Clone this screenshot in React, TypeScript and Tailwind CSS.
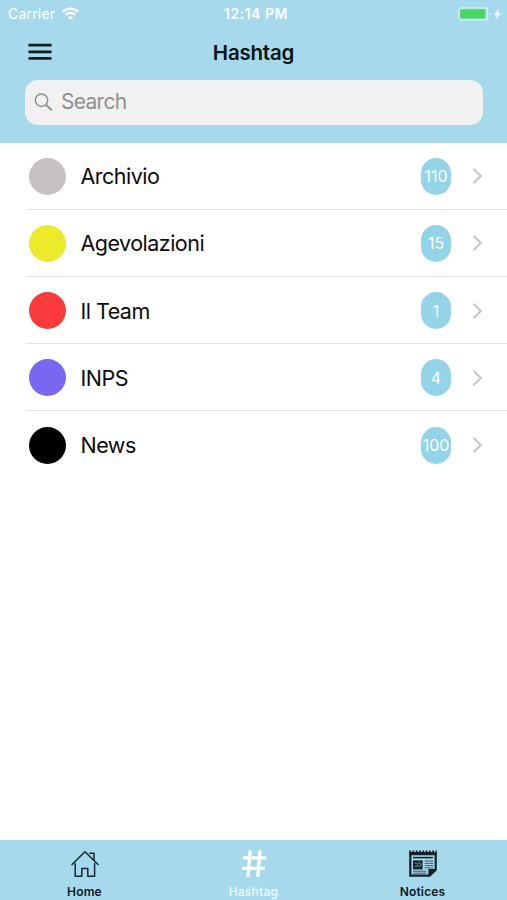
type Tag = {
  name: string;
  count: number;
  dot: string;
};

const tags: Tag[] = [
  {name: 'Archivio', count: 110, dot: 'bg-[#c5c2c1]'},
  {name: 'Agevolazioni', count: 15, dot: 'bg-[#ebeb2b]'},
  {name: 'Il Team', count: 1, dot: 'bg-[#fb3b3b]'},
  {name: 'INPS', count: 4, dot: 'bg-[#7a67f1]'},
  {name: 'News', count: 100, dot: 'bg-black'},
];

function WifiIcon() {
  return (
    <svg className="w-[17px] h-[13px]" viewBox="0 0 17 13" fill="none" stroke="white" strokeWidth="2.3">
      <path d="M.9 4.9C5.1.5 11.9.5 16.1 4.9" />
      <path d="M3.7 7.9c2.7-2.7 6.9-2.7 9.6 0" />
      <path d="M8.5 12.8 5.8 10.2c1.5-1.4 3.9-1.4 5.4 0z" fill="white" stroke="none" />
    </svg>
  );
}

function BatteryIcon() {
  return (
    <svg className="w-[44px] h-[14px]" viewBox="0 0 44 14">
      <rect x=".8" y=".8" width="28.6" height="12" rx="2.5" fill="none" stroke="#d5f2ec" strokeWidth="1.2" />
      <rect x="2.2" y="2.2" width="25" height="9.2" rx="1" fill="#49d763" />
      <path d="M31 5.2c1.5.6 1.5 3 0 3.6z" fill="#d5f2ec" />
      <path d="M41 1.6 36 8h2.9l-1.5 4.8L43.2 6h-3.3z" fill="white" />
    </svg>
  );
}

function HomeIcon() {
  return (
    <svg className="w-7 h-7" viewBox="0 0 28 28" fill="none" stroke="#17282e" strokeWidth="1.5" strokeLinejoin="round" strokeLinecap="round">
      <path d="M1 14.5 14 1.7l13 12.8" />
      <path d="M18.8 3.2h4.2v6.5M4.2 13.8v12.4h6.6v-7.6h6v7.6h6.8V13.8" />
    </svg>
  );
}

function HashIcon() {
  return (
    <svg className="w-7 h-7" viewBox="0 0 28 28" fill="none" stroke="white" strokeWidth="3.3">
      <path d="M10.2.4 8 26.8M20 .4 17.8 26.8M3 7.9h23.3M1.8 18.4h23.3" />
    </svg>
  );
}

function NoticesIcon() {
  return (
    <svg className="w-7 h-7" viewBox="0 0 28 28">
      <path d="M1.3 3V25.7H20.6l6.1-6V3" fill="none" stroke="#132126" strokeWidth="2.2" />
      <path d="M.2.4h1.7v1.7h1.6V.4h1.7v1.7h1.6V.4h1.7v1.7h1.6V.4h1.7v1.7h1.6V.4h1.7v1.7h1.6V.4h1.7v1.7h1.6V.4h1.7v1.7h1.6V.4h1.7v1.7h1.6V.4h1.2v4.9H.2z" fill="#132126" />
      <path d="M19.4 26.8v-7.9h8.4z" fill="#132126" />
      <rect x="4" y="10.4" width="9.6" height="9" fill="#132126" />
      <path d="M4 7.6h20" stroke="#132126" strokeWidth="1.5" />
      <path d="M15.6 11h8.6M15.6 13.3h8.6M15.6 15.6h8.6M15.6 17.9h8.6M4 21.2h13.5M4 23.2h13.5" stroke="#3c5b67" strokeWidth="1" />
      <path d="M5.6 13.2h2.2M5.6 16.4h2.6" stroke="#8bb7c5" strokeWidth=".8" />
      <circle cx="10.2" cy="14.6" r="1.8" fill="none" stroke="#8bb7c5" strokeWidth=".8" />
    </svg>
  );
}

function TagRow({tag, last}: {tag: Tag; last: boolean}) {
  return (
    <li className={`ml-[26px] h-[67.2px] flex items-center pt-px pl-[3px] pr-[23px] border-b ${last ? 'border-transparent' : 'border-[#e2e2e3]'}`}>
      <span className={`size-[37px] rounded-full ${tag.dot}`} />
      <span className="ml-[14.5px] flex-1 text-[21.5px] tracking-[-0.52px] text-[#0b0b0b]">{tag.name}</span>
      <span className="w-[30px] h-[37px] rounded-[15px] bg-[#94d4e8] flex items-center justify-center text-white text-base">
        {tag.count}
      </span>
      <svg className="ml-[21px] w-3 h-[18px]" viewBox="0 0 12 18" fill="none" stroke="#c5c5c8" strokeWidth="2">
        <path d="m1.4 1.8 7.5 7.2-7.5 7.2" />
      </svg>
    </li>
  );
}

export default function App() {
  return (
    <div className="h-[900px] w-[507px] flex flex-col bg-white font-['Inter','Liberation_Sans',sans-serif] overflow-hidden">
      <header className="h-[142.7px] bg-[#a5d9eb]">
        <div className="h-[27px] grid grid-cols-3 items-center text-white">
          <div className="flex items-center gap-[7px] pl-[8px] text-[14px] tracking-[0.2px]">
            Carrier
            <WifiIcon />
          </div>
          <div className="pb-px pl-[5px] text-center text-[14px] font-semibold tracking-[0.5px]">12:14 PM</div>
          <div className="flex justify-end pr-[5px]">
            <BatteryIcon />
          </div>
        </div>
        <div className="h-[53px] grid grid-cols-3 items-center">
          <svg className="ml-7 mb-1 w-6 h-[18px]" viewBox="0 0 24 18" stroke="#101e22" strokeWidth="2.7">
            <path d="M.5 2.2h23M.5 8.8h23M.5 15.4h23" />
          </svg>
          <h1 className="text-center text-[20.5px] font-semibold tracking-[-0.2px] text-[#091215]">Hashtag</h1>
        </div>
        <div className="mr-[24.5px] ml-[25px] h-[44.5px] rounded-[13px] bg-[#f1f1f1] flex items-center pl-[9px] gap-2 text-[#8f8f92]">
          <svg className="w-[19px] h-[19px]" viewBox="0 0 19 19" fill="none" stroke="currentColor" strokeWidth="1.5">
            <circle cx="7.5" cy="7.2" r="6.2" />
            <path d="m12 11.7 5.8 5.6" strokeWidth="2" />
          </svg>
          <span className="mb-px text-[21px] tracking-[-0.7px]">Search</span>
        </div>
      </header>

      <ul className="flex-1">
        {tags.map((tag, i) => (
          <TagRow key={tag.name} tag={tag} last={i === tags.length - 1} />
        ))}
      </ul>

      <nav className="h-[60px] bg-[#a5d9eb] grid grid-cols-3 text-xs font-semibold leading-[14px] tracking-[0.15px] text-[#0d1a1e]">
        <div className="flex flex-col items-center pt-[10px] gap-[7px]">
          <HomeIcon />
          Home
        </div>
        <div className="flex flex-col items-center pt-[10px] gap-[7px] text-[#e9f8fd]">
          <HashIcon />
          Hashtag
        </div>
        <div className="flex flex-col items-center pt-[10px] gap-[7px]">
          <NoticesIcon />
          Notices
        </div>
      </nav>
    </div>
  );
}
